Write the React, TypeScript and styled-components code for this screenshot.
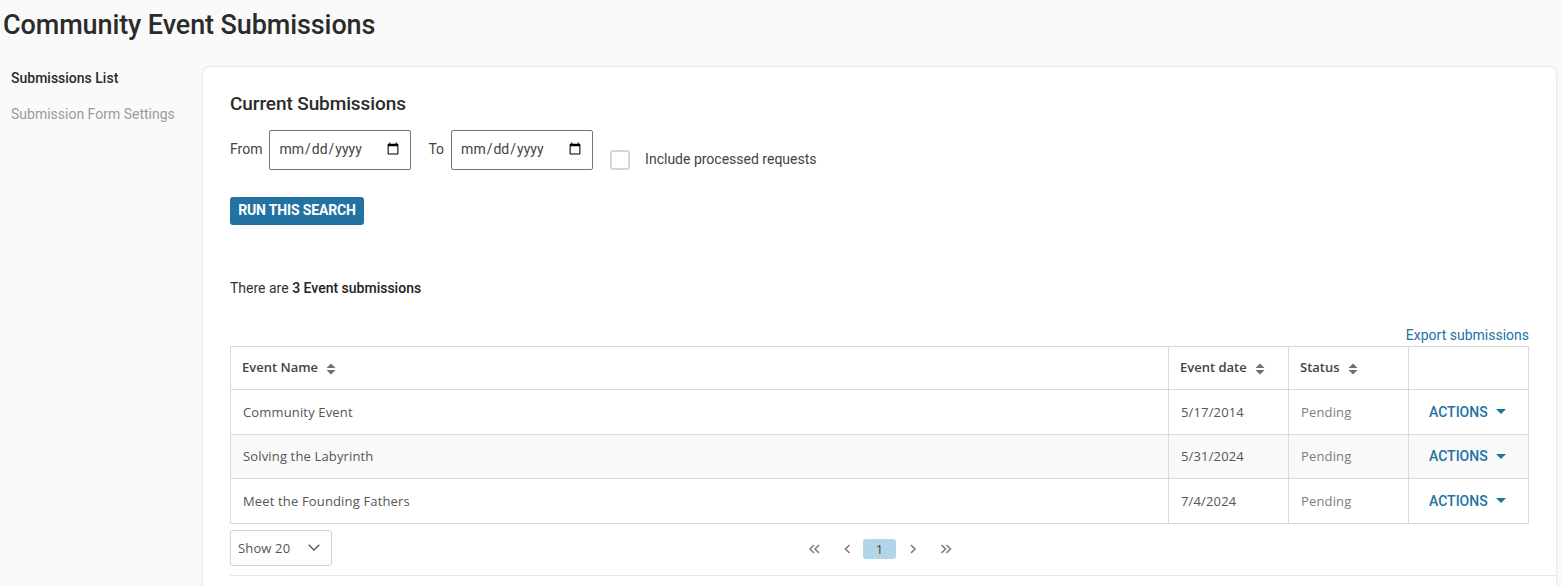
import React from "react";
import styled, { createGlobalStyle } from "styled-components";

const Global = createGlobalStyle`
  html, body { margin: 0; padding: 0; height: 586px; overflow: hidden; background: #fafafa; }
  body { font-family: Roboto, "Liberation Sans", sans-serif; color: #2b2b2b; }
  * { box-sizing: border-box; }
`;

const Page = styled.div`
  width: 1563px;
  height: 586px;
  overflow: hidden;
  display: flex;
  flex-direction: column;
`;
const Title = styled.h1`
  margin: 0;
  padding: 9px 0 0 3px;
  height: 67px;
  flex: none;
  font-size: 27px;
  line-height: 32px;
  font-weight: 500;
  color: #2b2b2b;
  letter-spacing: -0.1px;
`;
const Body = styled.div`
  display: flex;
  align-items: flex-start;
  flex: none;
`;
const Side = styled.nav`
  width: 203px;
  flex: none;
  padding: 2px 0 0 11px;
  display: flex;
  flex-direction: column;
  gap: 18px;
`;
const SideLink = styled.a<{ $active?: boolean }>`
  font-size: 14px;
  line-height: 18px;
  font-weight: ${(p) => (p.$active ? 500 : 400)};
  color: ${(p) => (p.$active ? "#2b2b2b" : "#9a9a9a")};
`;
const Card = styled.main`
  width: 1353px;
  height: 560px;
  background: #fff;
  border-radius: 6px;
  box-shadow: 0 0 3px rgba(0, 0, 0, 0.18);
  padding: 26px 27px 0 27px;
`;
const Heading = styled.h2`
  margin: 0;
  font-size: 19px;
  line-height: 22px;
  font-weight: 500;
  letter-spacing: -0.1px;
  color: #2b2b2b;
`;
const Filters = styled.div`
  display: flex;
  align-items: flex-start;
  margin-top: 15px;
`;
const FieldLabel = styled.label`
  font-size: 14px;
  line-height: 38px;
  color: #444;
  margin-right: 7px;
`;
const DateInput = styled.input`
  width: 142px;
  height: 40px;
  border: 1px solid #767676;
  border-radius: 2px;
  background: #fff;
  padding: 0 8px 2px 8px;
  font-family: Roboto, sans-serif;
  font-size: 14px;
  color: #444;
  margin-right: 17px;
`;
const CheckWrap = styled.div`
  display: flex;
  align-items: center;
  height: 20px;
  margin-top: 20px;
`;
const Check = styled.span`
  width: 20px;
  height: 20px;
  border: 2px solid #d3d7dd;
  border-radius: 3px;
  background: #fff;
  margin-right: 15px;
`;
const CheckLabel = styled.span`
  font-size: 14px;
  color: #444;
  padding-bottom: 2px;
`;
const RunButton = styled.button`
  display: block;
  margin-top: 27px;
  height: 28px;
  width: 134px;
  border: 0;
  border-radius: 3px;
  background: #2272a3;
  color: #fff;
  font-family: Roboto, sans-serif;
  font-size: 14px;
  font-weight: 700;
  letter-spacing: -0.15px;
  padding: 0 0 2px;
`;
const Count = styled.p`
  margin: 54px 0 0;
  font-size: 14px;
  line-height: 18px;
  color: #333;
  b { font-weight: 500; color: #222; }
`;
const ExportRow = styled.div`
  display: flex;
  justify-content: flex-end;
  margin-top: 29px;
  height: 18px;
`;
const ExportLink = styled.a`
  font-size: 14px;
  line-height: 18px;
  color: #2272a3;
`;
const Table = styled.table`
  width: 1299px;
  margin-top: 2px;
  border-collapse: collapse;
  table-layout: fixed;
  font-family: "Open Sans", sans-serif;
  font-size: 13px;
  letter-spacing: 0.15px;
`;
const Th = styled.th`
  border: 1px solid #dadada;
  height: 43px;
  padding: 0 0 2px 11px;
  text-align: left;
  font-family: "Open Sans", sans-serif;
  font-size: 13px;
  font-weight: 600;
  letter-spacing: 0;
  color: #444;
`;
const Tr = styled.tr<{ $shade?: boolean }>`
  background: ${(p) => (p.$shade ? "#f9f9f9" : "#fff")};
`;
const Td = styled.td<{ $muted?: boolean }>`
  border: 1px solid #dadada;
  height: 44.5px;
  padding: 0 0 0 12px;
  color: ${(p) => (p.$muted ? "#7d7d7d" : "#555")};
`;
const ActionCell = styled(Td)`
  padding-left: 20px;
`;
const Actions = styled.a`
  display: inline-flex;
  align-items: center;
  gap: 8px;
  font-family: Roboto, sans-serif;
  font-size: 14px;
  font-weight: 500;
  letter-spacing: 0;
  color: #2272a3;
`;
const SortIcon = styled.svg`
  margin-left: 8px;
  vertical-align: -3px;
`;
const Footer = styled.div`
  display: grid;
  grid-template-columns: 1fr auto 1fr;
  align-items: center;
  margin-top: 6px;
  height: 36px;
`;
const ShowBox = styled.div`
  width: 102px;
  height: 36px;
  border: 1px solid #ced4da;
  border-radius: 3px;
  display: flex;
  align-items: center;
  justify-content: space-between;
  padding: 0 11px 0 7px;
  font-family: "Open Sans", sans-serif;
  font-size: 13px;
  letter-spacing: 0.15px;
  color: #555;
`;
const Pager = styled.div`
  display: flex;
  align-items: center;
  color: #7d7d7d;
  padding-top: 2px;
`;
const PageBtn = styled.span`
  width: 33px;
  display: flex;
  justify-content: center;
  align-items: center;
`;
const Current = styled.span`
  width: 33px;
  height: 20px;
  background: #b3d5e8;
  border-radius: 3px;
  text-align: center;
  font-family: "Open Sans", sans-serif;
  font-size: 13px;
  line-height: 20px;
  color: #444;
`;
const Rule = styled.hr`
  margin: 9px -27px 0 0;
  border: 0;
  border-top: 1px solid #e6e6e6;
`;

const Sort = () => (
  <SortIcon width="10" height="12" viewBox="0 0 10 12" aria-hidden>
    <path d="M5 0.5 9.5 5H0.5Z M0.5 7H9.5L5 11.5Z" fill="#67707c" />
  </SortIcon>
);
const Caret = () => (
  <svg width="10" height="5" viewBox="0 0 10 5" aria-hidden>
    <path d="M0 0H10L5 5Z" fill="#2272a3" />
  </svg>
);
const Chev = ({ d }: { d: string }) => (
  <svg width="14" height="12" viewBox="0 0 14 12" fill="none" stroke="#7d7d7d" strokeWidth="1.6" aria-hidden>
    <path d={d} />
  </svg>
);

const rows = [
  { name: "Community Event", date: "5/17/2014" },
  { name: "Solving the Labyrinth", date: "5/31/2024" },
  { name: "Meet the Founding Fathers", date: "7/4/2024" },
];

export default function App() {
  return (
    <Page>
      <Global />
      <Title>Community Event Submissions</Title>
      <Body>
        <Side>
          <SideLink $active>Submissions List</SideLink>
          <SideLink>Submission Form Settings</SideLink>
        </Side>
        <Card>
          <Heading>Current Submissions</Heading>
          <Filters>
            <FieldLabel>From</FieldLabel>
            <DateInput type="date" />
            <FieldLabel>To</FieldLabel>
            <DateInput type="date" />
            <CheckWrap>
              <Check />
              <CheckLabel>Include processed requests</CheckLabel>
            </CheckWrap>
          </Filters>
          <RunButton>RUN THIS SEARCH</RunButton>
          <Count>
            There are <b>3 Event submissions</b>
          </Count>
          <ExportRow>
            <ExportLink>Export submissions</ExportLink>
          </ExportRow>
          <Table>
            <colgroup>
              <col />
              <col width="120" />
              <col width="120" />
              <col width="120" />
            </colgroup>
            <thead>
              <tr>
                <Th>Event Name<Sort /></Th>
                <Th>Event date<Sort /></Th>
                <Th>Status<Sort /></Th>
                <Th />
              </tr>
            </thead>
            <tbody>
              {rows.map((r, i) => (
                <Tr key={r.name} $shade={i === 1}>
                  <Td>{r.name}</Td>
                  <Td>{r.date}</Td>
                  <Td $muted>Pending</Td>
                  <ActionCell>
                    <Actions>ACTIONS <Caret /></Actions>
                  </ActionCell>
                </Tr>
              ))}
            </tbody>
          </Table>
          <Footer>
            <ShowBox>
              Show 20
              <svg width="12" height="7" viewBox="0 0 12 7" fill="none" stroke="#555" strokeWidth="1.3" aria-hidden>
                <path d="M0.7 0.7 6 6l5.3-5.3" />
              </svg>
            </ShowBox>
            <Pager>
              <PageBtn><Chev d="M7 2 3 6l4 4M12 2 8 6l4 4" /></PageBtn>
              <PageBtn><Chev d="M9.5 2 5.5 6l4 4" /></PageBtn>
              <Current>1</Current>
              <PageBtn><Chev d="M5 2l4 4-4 4" /></PageBtn>
              <PageBtn><Chev d="M2.5 2l4 4-4 4M7.5 2l4 4-4 4" /></PageBtn>
            </Pager>
            <span />
          </Footer>
          <Rule />
        </Card>
      </Body>
    </Page>
  );
}
